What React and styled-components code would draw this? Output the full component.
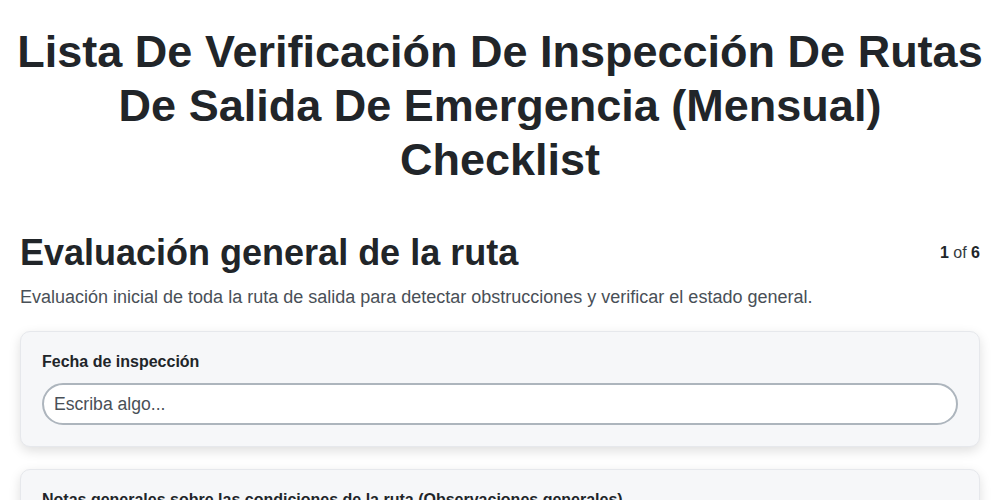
import React from 'react'
import styled, {createGlobalStyle} from 'styled-components'

const GlobalStyle = createGlobalStyle`
  body {
    margin: 0;
    background: #ffffff;
    font-family: "Liberation Sans", Arial, sans-serif;
    color: #212529;
  }
`

const Page = styled.div`
  padding: 25px 20px 20px;
`

const Title = styled.h1`
  margin: 0 -6px 44px;
  font-size: 45px;
  line-height: 54px;
  font-weight: 700;
  text-align: center;
  color: #212529;
`

const SectionHeader = styled.div`
  display: flex;
  align-items: center;
  justify-content: space-between;
`

const SectionTitle = styled.h2`
  margin: 0;
  font-size: 36px;
  line-height: 43px;
  font-weight: 700;
  color: #212529;
`

const Counter = styled.span`
  font-size: 16px;
  color: #343a40;
  b {
    color: #212529;
  }
`

const Description = styled.p`
  margin: 11px 0 22px;
  font-size: 18px;
  line-height: 24px;
  color: #495057;
`

const CardList = styled.div`
  display: flex;
  flex-direction: column;
  gap: 22px;
`

const Card = styled.div`
  background: #f6f7f9;
  border: 1px solid #e6e8ec;
  border-radius: 10px;
  padding: 20px 21px 21px;
  box-shadow: 0 4px 12px rgba(0, 0, 0, 0.13);
`

const Label = styled.label`
  display: block;
  font-size: 16px;
  line-height: 20px;
  font-weight: 700;
  color: #212529;
  margin-bottom: 11px;
`

const TextInput = styled.input`
  display: block;
  box-sizing: border-box;
  width: 100%;
  height: 42px;
  padding: 0 10px;
  border: 2px solid #adb5bd;
  border-radius: 21px;
  background: #ffffff;
  font-family: "Liberation Sans", Arial, sans-serif;
  font-size: 17.6px;
  color: #212529;
  outline: none;
  &::placeholder {
    color: #495057;
  }
`

const campos = [
  'Fecha de inspección',
  'Notas generales sobre las condiciones de la ruta (Observaciones generales)',
]

const App = () => {
  return (
    <Page>
      <GlobalStyle />
      <Title>
        Lista De Verificación De Inspección De Rutas De Salida De Emergencia (Mensual) Checklist
      </Title>
      <SectionHeader>
        <SectionTitle>Evaluación general de la ruta</SectionTitle>
        <Counter><b>1</b> of <b>6</b></Counter>
      </SectionHeader>
      <Description>
        Evaluación inicial de toda la ruta de salida para detectar obstrucciones y verificar el estado general.
      </Description>
      <CardList>
        {campos.map((campo) => (
          <Card key={campo}>
            <Label>{campo}</Label>
            <TextInput placeholder="Escriba algo..." />
          </Card>
        ))}
      </CardList>
    </Page>
  )
}

export default App
